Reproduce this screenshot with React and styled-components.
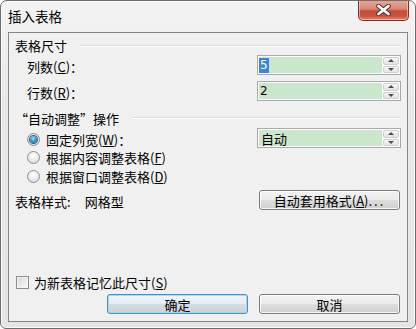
import React from "react";
import styled, { createGlobalStyle } from "styled-components";

const GlobalStyle = createGlobalStyle`
  html, body {
    margin: 0;
    padding: 0;
    background: #ffffff;
  }
  body {
    font-family: "Noto Sans CJK SC", "DejaVu Sans", sans-serif;
    font-size: 13px;
    color: #000;
  }
`;

const Window = styled.div`
  width: 416px;
  height: 329px;
  box-sizing: border-box;
  display: flex;
  flex-direction: column;
  border: 1px solid #6d6d6d;
  border-radius: 7px 7px 6px 6px;
  background: linear-gradient(180deg, #f3f3f3 0%, #e9e9e9 30%, #e4e4e4 100%);
  box-shadow: inset 0 0 0 1px #fafafa;
  overflow: hidden;
`;

const TitleBar = styled.div`
  height: 31px;
  display: flex;
  justify-content: space-between;
  align-items: flex-start;
  padding: 0 6px 0 7px;
`;

const Title = styled.span`
  font-size: 13.5px;
  line-height: 14px;
  margin-top: 8px;
  color: #000;
`;

const CloseButton = styled.div`
  width: 51px;
  height: 21px;
  margin-top: -1px;
  box-sizing: border-box;
  border: 1px solid #7e3226;
  border-top: none;
  border-radius: 0 0 5px 5px;
  background: linear-gradient(
    180deg,
    #e6ab9c 0%,
    #da8773 45%,
    #c64c38 55%,
    #c9523e 80%,
    #e08a6e 100%
  );
  box-shadow: inset 0 0 0 1px rgba(255, 220, 210, 0.55);
  display: flex;
  align-items: center;
  justify-content: center;
`;

const Client = styled.div`
  flex: 1;
  margin: 0 7px 6px 7px;
  border: 1px solid #858585;
  background: #f0f0f0;
  padding: 5px 6px 7px 6px;
  display: flex;
  flex-direction: column;
`;

const SectionHeader = styled.div`
  height: ${(p) => p.$h || 15}px;
  margin-top: ${(p) => p.$top || 0}px;
  display: flex;
  align-items: center;
  line-height: 15px;
  white-space: nowrap;
`;

const Rule = styled.div`
  flex: 1;
  height: 1px;
  margin-left: 13px;
  background: #dcdcdc;
  border-bottom: 1px solid #ffffff;
`;

const FieldRow = styled.div`
  height: 20px;
  margin-top: ${(p) => p.$top || 0}px;
  padding-left: ${(p) => p.$indent || 0}px;
  display: flex;
  align-items: center;
  justify-content: space-between;
  line-height: 15px;
  white-space: nowrap;
`;

const Label = styled.span`
  display: inline-flex;
  align-items: center;
  gap: 6px;
  margin-top: 2px;
`;

const SpinBox = styled.div`
  width: 144px;
  height: 20px;
  box-sizing: border-box;
  border: 1px solid #a9a9a9;
  background: #ffffff;
  padding: 1px;
  display: flex;
  gap: 1px;
`;

const SpinField = styled.div`
  flex: 1;
  background: #c9e8cb;
  display: flex;
  align-items: center;
  padding-left: ${(p) => (p.$latin ? 0 : 2)}px;
  font-family: ${(p) => (p.$latin ? '"DejaVu Sans", sans-serif' : "inherit")};
  font-size: ${(p) => (p.$latin ? 12 : 13)}px;
  line-height: 15px;
`;

const Plain = styled.span`
  padding: 0 1px;
`;

const Selected = styled(Plain)`
  background: #3a87d9;
  color: #ffffff;
`;

const Spinner = styled.div`
  width: 16px;
  display: flex;
  flex-direction: column;
  gap: 1px;
`;

const SpinHalf = styled.div`
  flex: 1;
  border: 1px solid #cfcfcf;
  border-radius: 2px;
  background: linear-gradient(180deg, #f6f6f6, #e3e3e3);
  display: flex;
  align-items: center;
  justify-content: center;
`;

const Arrow = styled.div`
  width: 0;
  height: 0;
  border-left: 3px solid transparent;
  border-right: 3px solid transparent;
  ${(p) =>
    p.$down
      ? "border-top: 3px solid #4d4d4d;"
      : "border-bottom: 3px solid #4d4d4d;"}
`;

const RadioRow = styled.div`
  height: 19px;
  padding-left: 12px;
  display: flex;
  align-items: center;
  gap: 6px;
  line-height: 15px;
  white-space: nowrap;
`;

const Radio = styled.span`
  width: 13px;
  height: 13px;
  box-sizing: border-box;
  border-radius: 50%;
  border: 1px solid #8d8d8d;
  background: radial-gradient(circle at 50% 35%, #ffffff 0%, #e6e6e6 60%, #cfcfcf 100%);
  display: flex;
  align-items: center;
  justify-content: center;
  flex-shrink: 0;
`;

const RadioDot = styled.span`
  width: 7px;
  height: 7px;
  border-radius: 50%;
  background: radial-gradient(circle at 45% 35%, #a6e0f5 0%, #3a9ccf 45%, #1c5a86 100%);
  box-shadow: 0 0 0 1px #2b5f80;
`;

const StyleName = styled.span`
  display: inline-flex;
  gap: 14px;
  margin-top: 2px;
`;

const Spacer = styled.div`
  flex: 1;
`;

const CheckRow = styled.div`
  height: 16px;
  padding-left: 1px;
  display: flex;
  align-items: center;
  gap: 5px;
  line-height: 15px;
  white-space: nowrap;
`;

const CheckBox = styled.span`
  width: 13px;
  height: 13px;
  box-sizing: border-box;
  border: 1px solid #8d8d8d;
  background: linear-gradient(135deg, #d4d4d4 0%, #ececec 60%, #fbfbfb 100%);
  box-shadow: inset 0 0 0 1px #f4f4f4;
`;

const ButtonRow = styled.div`
  margin-top: 4px;
  display: flex;
  justify-content: flex-end;
  gap: 11px;
  padding-right: 1px;
`;

const Button = styled.div`
  width: 141px;
  height: 20px;
  margin-right: ${(p) => p.$right || 0}px;
  box-sizing: border-box;
  border: 1px solid ${(p) => (p.$default ? "#4a8fbf" : "#7c7c7c")};
  border-radius: 3px;
  background: ${(p) =>
    p.$default
      ? "linear-gradient(180deg, #f0f4f7 0%, #e6edf1 48%, #d3dde3 52%, #c9d4da 100%)"
      : "linear-gradient(180deg, #f2f2f2 0%, #ebebeb 48%, #dddddd 52%, #cfcfcf 100%)"};
  box-shadow: inset 0 0 0 1px
    ${(p) => (p.$default ? "rgba(160, 215, 240, 0.9)" : "rgba(255,255,255,0.8)")};
  display: flex;
  align-items: center;
  justify-content: center;
  line-height: 15px;
  white-space: nowrap;
`;

const Dots = styled.span`
  letter-spacing: 2px;
`;

const Key = styled.u`
  text-underline-offset: 1px;
`;

function Spin({ children, latin }) {
  return (
    <SpinBox>
      <SpinField $latin={latin}>{children}</SpinField>
      <Spinner>
        <SpinHalf>
          <Arrow />
        </SpinHalf>
        <SpinHalf>
          <Arrow $down />
        </SpinHalf>
      </Spinner>
    </SpinBox>
  );
}

export default function App() {
  return (
    <>
      <GlobalStyle />
      <Window lang="zh-CN">
        <TitleBar>
          <Title>插入表格</Title>
          <CloseButton>
            <svg width="17" height="12" viewBox="0 0 17 12">
              <path
                d="M3.5 2 L13.5 10 M13.5 2 L3.5 10"
                stroke="#5a2a22"
                strokeWidth="4.6"
                strokeLinecap="round"
              />
              <path
                d="M3.5 2 L13.5 10 M13.5 2 L3.5 10"
                stroke="#ffffff"
                strokeWidth="2.8"
                strokeLinecap="round"
              />
            </svg>
          </CloseButton>
        </TitleBar>
        <Client>
          <SectionHeader>
            表格尺寸
            <Rule />
          </SectionHeader>
          <FieldRow $top={2} $indent={12}>
            <Label>
              <span>
                列数(<Key>C</Key>)：
              </span>
            </Label>
            <Spin latin>
              <Selected>5</Selected>
            </Spin>
          </FieldRow>
          <FieldRow $top={6} $indent={12}>
            <Label>
              <span>
                行数(<Key>R</Key>)：
              </span>
            </Label>
            <Spin latin>
              <Plain>2</Plain>
            </Spin>
          </FieldRow>
          <SectionHeader $top={9} $h={16}>
            “自动调整”操作
            <Rule />
          </SectionHeader>
          <FieldRow $top={2} $indent={12}>
            <Label>
              <Radio>
                <RadioDot />
              </Radio>
              <span>
                固定列宽(<Key>W</Key>)：
              </span>
            </Label>
            <Spin>自动</Spin>
          </FieldRow>
          <RadioRow>
            <Radio />
            <span>
              根据内容调整表格(<Key>F</Key>)
            </span>
          </RadioRow>
          <RadioRow>
            <Radio />
            <span>
              根据窗口调整表格(<Key>D</Key>)
            </span>
          </RadioRow>
          <FieldRow $top={4}>
            <StyleName>
              <span>表格样式:</span>
              <span>网格型</span>
            </StyleName>
            <Button $right={1}>
              自动套用格式(<Key>A</Key>)<Dots>...</Dots>
            </Button>
          </FieldRow>
          <Spacer />
          <CheckRow>
            <CheckBox />
            <span>
              为新表格记忆此尺寸(<Key>S</Key>)
            </span>
          </CheckRow>
          <ButtonRow>
            <Button $default>确定</Button>
            <Button>取消</Button>
          </ButtonRow>
        </Client>
      </Window>
    </>
  );
}
